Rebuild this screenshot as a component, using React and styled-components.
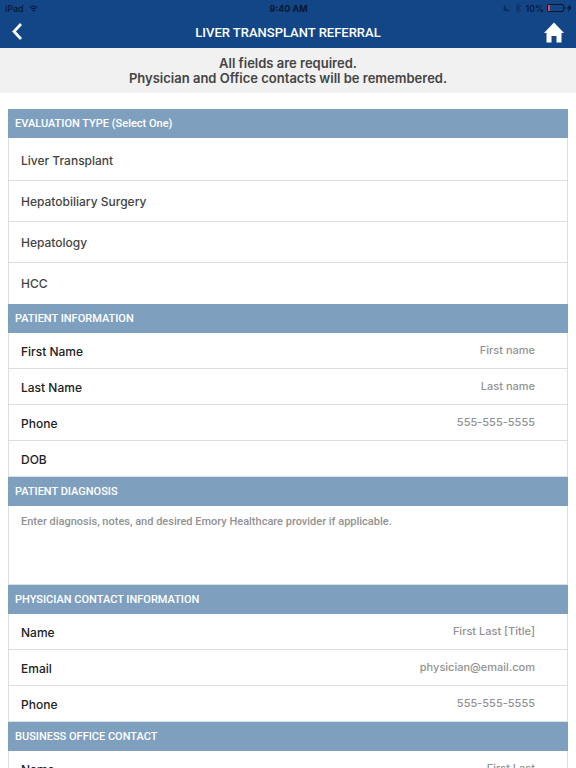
import React from 'react'
import styled, { createGlobalStyle } from 'styled-components'

const COLORS = {
  header: '#134687',
  status: '#071630',
  notice: '#f1f1f1',
  section: '#7f9fbf',
  border: '#dcdfe1',
  text: '#444444',
  label: '#222222',
  placeholder: '#929292'
}

const EVALUATION_TYPES = [
  'Liver Transplant',
  'Hepatobiliary Surgery',
  'Hepatology',
  'HCC'
]

const PATIENT_FIELDS = [
  { id: 'patient-first', label: 'First Name', placeholder: 'First name' },
  { id: 'patient-last', label: 'Last Name', placeholder: 'Last name' },
  { id: 'patient-phone', label: 'Phone', placeholder: '555-555-5555', type: 'tel' },
  { id: 'patient-dob', label: 'DOB' }
]

const PHYSICIAN_FIELDS = [
  { id: 'physician-name', label: 'Name', placeholder: 'First Last [Title]' },
  { id: 'physician-email', label: 'Email', placeholder: 'physician@email.com', type: 'email' },
  { id: 'physician-phone', label: 'Phone', placeholder: '555-555-5555', type: 'tel' }
]

const OFFICE_FIELDS = [
  { id: 'office-name', label: 'Name', placeholder: 'First Last' }
]

const FieldList = ({ fields }) =>
  fields.map(({ id, label, placeholder, type = 'text' }) => (
    <Field key={id}>
      <label htmlFor={id}>{label}</label>
      <FieldInput id={id} type={type} placeholder={placeholder} />
    </Field>
  ))

const StatusBar = () => (
  <Status>
    <StatusGroup>
      <span>iPad</span>
      <svg width="9" height="7" viewBox="0 0 18 14" fill="none" stroke="currentColor" strokeWidth="2.2">
        <path d="M1.5 5.2a10.6 10.6 0 0 1 15 0M4.6 8.4a6.2 6.2 0 0 1 8.8 0" />
        <path d="M9 13.5L6.4 10.8a3.7 3.7 0 0 1 5.2 0z" fill="currentColor" stroke="none" />
      </svg>
    </StatusGroup>
    <Clock>9:40 AM</Clock>
    <StatusGroup $end>
      <svg width="7" height="8" viewBox="0 0 14 16" opacity="0.55">
        <path d="M4.5 2A7 7 0 1 0 14 11.5 7.500 7.500 0 0 1 4.500 2z" fill="currentColor" />
      </svg>
      <Bluetooth width="6" height="10" viewBox="0 0 12 20" fill="none" stroke="currentColor" strokeWidth="1.5" opacity="0.6">
        <path d="M1 5.5l10 8.5-5 4.5v-17L11 6 1 14.5" />
      </Bluetooth>
      <span>10%</span>
      <svg width="25" height="8" viewBox="0 0 25 8">
        <rect x="0.5" y="0.5" width="16" height="7" rx="1.5" fill="none" stroke="currentColor" />
        <rect x="1" y="1" width="2" height="6" fill="#f0484c" />
        <path d="M17.5 2.5a1.6 1.6 0 0 1 0 3z" fill="currentColor" />
        <path d="M23.6 0l-3.8 4.6h2L20.900 8l3.900-4.700h-2.100z" fill="currentColor" />
      </svg>
    </StatusGroup>
  </Status>
)

const App = () => (
  <Screen>
    <GlobalStyle />
    <Header>
      <StatusBar />
      <NavBar>
        <NavButton aria-label="Back">
          <svg width="10" height="18" viewBox="0 0 10 18">
            <path d="M9 1L2 8.5 9 16" fill="none" stroke="#fff" strokeWidth="2.8" />
          </svg>
        </NavButton>
        <h1>LIVER TRANSPLANT REFERRAL</h1>
        <NavButton aria-label="Home" $end>
          <svg width="20" height="21" viewBox="0 0 20 21">
            <path d="M10 0.5L0 11h2.5v9.5h5v-6.500h5v6.500h5V11H20z" fill="#fff" />
          </svg>
        </NavButton>
      </NavBar>
    </Header>
    <Content>
      <Notice>
        All fields are required.
        <br />
        Physician and Office contacts will be remembered.
      </Notice>
      <Form>
        <SectionTitle>EVALUATION TYPE (Select One)</SectionTitle>
        <Options role="radiogroup" aria-label="Evaluation type">
          {EVALUATION_TYPES.map(type => (
            <Option key={type}>
              <input type="radio" name="evaluation" value={type} />
              {type}
            </Option>
          ))}
        </Options>
        <SectionTitle>PATIENT INFORMATION</SectionTitle>
        <FieldList fields={PATIENT_FIELDS} />
        <SectionTitle as="label" htmlFor="diagnosis">PATIENT DIAGNOSIS</SectionTitle>
        <Diagnosis
          id="diagnosis"
          placeholder="Enter diagnosis, notes, and desired Emory Healthcare provider if applicable."
        />
        <SectionTitle>PHYSICIAN CONTACT INFORMATION</SectionTitle>
        <FieldList fields={PHYSICIAN_FIELDS} />
        <SectionTitle>BUSINESS OFFICE CONTACT</SectionTitle>
        <FieldList fields={OFFICE_FIELDS} />
      </Form>
    </Content>
  </Screen>
)

const GlobalStyle = createGlobalStyle`
  * {
    box-sizing: border-box;
  }

  body {
    margin: 0;
    background: #fff;
    font-family: Inter, 'Liberation Sans', sans-serif;
  }

  input,
  textarea,
  button {
    font-family: inherit;
  }
`

const Screen = styled.div`
  height: 100vh;
  display: flex;
  flex-direction: column;
`

const Header = styled.header`
  flex: none;
  background: ${COLORS.header};
`

const Status = styled.div`
  display: grid;
  grid-template-columns: 1fr auto 1fr;
  align-items: center;
  height: 16px;
  padding: 0 4px 0 5px;
  color: ${COLORS.status};
  font-size: 9px;
  font-weight: 500;
`

const StatusGroup = styled.div`
  display: flex;
  align-items: center;
  justify-content: ${({ $end }) => ($end ? 'flex-end' : 'flex-start')};
  gap: ${({ $end }) => ($end ? 3 : 5)}px;
`

const Bluetooth = styled.svg`
  margin: 0 2px;
`

const Clock = styled.span`
  font-weight: 700;
`

const NavBar = styled.div`
  display: grid;
  grid-template-columns: 44px 1fr 44px;
  align-items: center;
  height: 32px;
  color: #fff;

  h1 {
    margin: 0;
    font-family: Roboto, sans-serif;
    font-size: 13px;
    font-weight: 500;
    text-align: center;
  }
`

const NavButton = styled.button`
  display: flex;
  align-items: center;
  justify-content: ${({ $end }) => ($end ? 'flex-end' : 'flex-start')};
  height: 32px;
  padding: 0 12px;
  border: none;
  background: none;
  cursor: pointer;

  svg {
    flex: none;
  }
`

const Content = styled.main`
  flex: 1;
  min-height: 0;
  overflow-y: auto;
  scrollbar-width: none;
`

const Notice = styled.p`
  margin: 0;
  padding: 8px 12px 7px;
  background: ${COLORS.notice};
  color: ${COLORS.text};
  font-size: 13px;
  font-weight: 600;
  line-height: 15px;
  text-align: center;
`

const Form = styled.form`
  margin: 16px 8px;
`

const SectionTitle = styled.h2`
  display: flex;
  align-items: center;
  height: 29px;
  margin: 0;
  padding: 0 7px;
  background: ${COLORS.section};
  color: #fff;
  font-family: Roboto, sans-serif;
  font-size: 11px;
  font-weight: 500;
`

const Options = styled.div`
  padding-top: 2px;
  border: 1px solid ${COLORS.border};
  border-width: 0 1px;
`

const Option = styled.label`
  display: flex;
  align-items: center;
  height: 41px;
  padding: 0 12px;
  border-bottom: 1px solid ${COLORS.border};
  color: ${COLORS.text};
  font-size: 12px;
  font-weight: 500;
  cursor: pointer;

  &:last-child {
    border-bottom: none;
  }

  input {
    position: absolute;
    opacity: 0;
    pointer-events: none;
  }
`

const Field = styled.div`
  display: flex;
  align-items: center;
  height: 36px;
  padding: 0 32px 0 12px;
  border: 1px solid ${COLORS.border};
  border-top: none;
  color: ${COLORS.label};
  font-size: 12px;
  font-weight: 500;

  label {
    flex: none;
    padding-top: 2px;
  }
`

const FieldInput = styled.input`
  flex: 1;
  min-width: 0;
  height: 32px;
  padding: 0 0 2px;
  border: none;
  outline: none;
  background: none;
  color: ${COLORS.label};
  font-size: 11px;
  font-weight: 500;
  text-align: right;

  &::placeholder {
    color: ${COLORS.placeholder};
    opacity: 1;
  }
`

const Diagnosis = styled.textarea`
  display: block;
  width: 100%;
  height: 79px;
  padding: 8px 12px;
  border: 1px solid ${COLORS.border};
  border-top: none;
  outline: none;
  resize: none;
  color: ${COLORS.label};
  font-family: Roboto, sans-serif;
  font-size: 11px;
  font-weight: 500;
  line-height: 15px;

  &::placeholder {
    color: ${COLORS.placeholder};
    opacity: 1;
  }
`

export default App
